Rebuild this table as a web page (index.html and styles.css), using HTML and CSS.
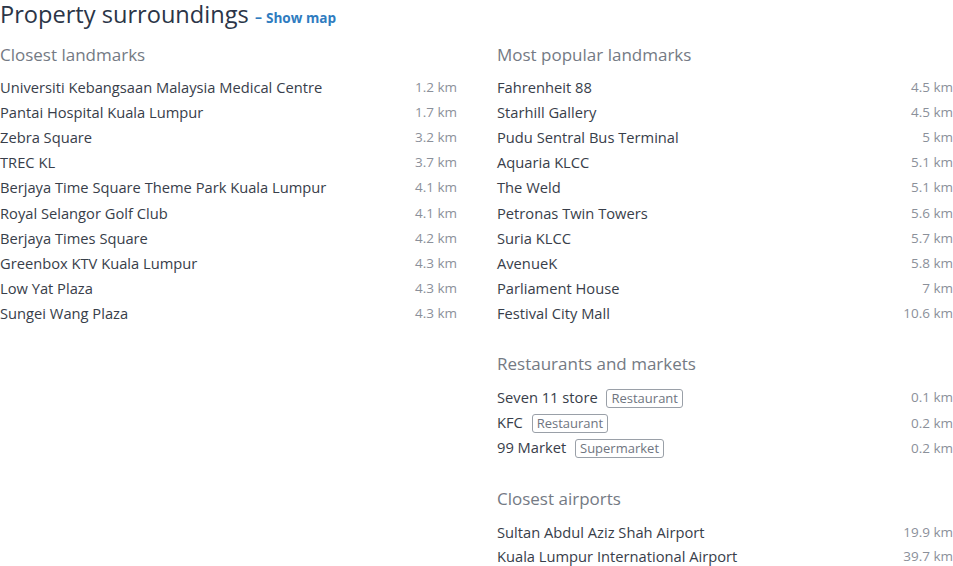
FILE: index.html
```html
<!DOCTYPE html>
<html>
<head>
<meta charset="utf-8">
<link rel="stylesheet" href="styles.css">
</head>
<body>
<div class="page">
  <h1 class="title">Property surroundings <span class="dash">–</span><a class="map-link" href="#">Show map</a></h1>
  <div class="columns">
    <div class="col">
      <section class="group">
        <h2 class="group-title">Closest landmarks</h2>
        <ul class="list">
          <li class="row"><span class="name">Universiti Kebangsaan Malaysia Medical Centre</span><span class="dist">1.2 km</span></li>
          <li class="row"><span class="name">Pantai Hospital Kuala Lumpur</span><span class="dist">1.7 km</span></li>
          <li class="row"><span class="name">Zebra Square</span><span class="dist">3.2 km</span></li>
          <li class="row"><span class="name">TREC KL</span><span class="dist">3.7 km</span></li>
          <li class="row"><span class="name">Berjaya Time Square Theme Park Kuala Lumpur</span><span class="dist">4.1 km</span></li>
          <li class="row"><span class="name">Royal Selangor Golf Club</span><span class="dist">4.1 km</span></li>
          <li class="row"><span class="name">Berjaya Times Square</span><span class="dist">4.2 km</span></li>
          <li class="row"><span class="name">Greenbox KTV Kuala Lumpur</span><span class="dist">4.3 km</span></li>
          <li class="row"><span class="name">Low Yat Plaza</span><span class="dist">4.3 km</span></li>
          <li class="row"><span class="name">Sungei Wang Plaza</span><span class="dist">4.3 km</span></li>
        </ul>
      </section>
    </div>
    <div class="col">
      <section class="group">
        <h2 class="group-title">Most popular landmarks</h2>
        <ul class="list">
          <li class="row"><span class="name">Fahrenheit 88</span><span class="dist">4.5 km</span></li>
          <li class="row"><span class="name">Starhill Gallery</span><span class="dist">4.5 km</span></li>
          <li class="row"><span class="name">Pudu Sentral Bus Terminal</span><span class="dist">5 km</span></li>
          <li class="row"><span class="name">Aquaria KLCC</span><span class="dist">5.1 km</span></li>
          <li class="row"><span class="name">The Weld</span><span class="dist">5.1 km</span></li>
          <li class="row"><span class="name">Petronas Twin Towers</span><span class="dist">5.6 km</span></li>
          <li class="row"><span class="name">Suria KLCC</span><span class="dist">5.7 km</span></li>
          <li class="row"><span class="name">AvenueK</span><span class="dist">5.8 km</span></li>
          <li class="row"><span class="name">Parliament House</span><span class="dist">7 km</span></li>
          <li class="row"><span class="name">Festival City Mall</span><span class="dist">10.6 km</span></li>
        </ul>
      </section>
      <section class="group">
        <h2 class="group-title">Restaurants and markets</h2>
        <ul class="list list-tags">
          <li class="row"><span class="name">Seven 11 store <span class="tag">Restaurant</span></span><span class="dist">0.1 km</span></li>
          <li class="row"><span class="name">KFC <span class="tag">Restaurant</span></span><span class="dist">0.2 km</span></li>
          <li class="row"><span class="name">99 Market <span class="tag">Supermarket</span></span><span class="dist">0.2 km</span></li>
        </ul>
      </section>
      <section class="group">
        <h2 class="group-title">Closest airports</h2>
        <ul class="list list-air">
          <li class="row"><span class="name">Sultan Abdul Aziz Shah Airport</span><span class="dist">19.9 km</span></li>
          <li class="row"><span class="name">Kuala Lumpur International Airport</span><span class="dist">39.7 km</span></li>
        </ul>
      </section>
    </div>
  </div>
</div>
</body>
</html>
```

FILE: styles.css
```css
* { box-sizing: border-box; }
html, body { margin: 0; padding: 0; background: #ffffff; }
body {
  font-family: "Open Sans", "Noto Sans", sans-serif;
  color: #383e4a;
}
.page { width: 953px; }
.title {
  margin: 0;
  font-size: 23.6px;
  font-weight: 400;
  line-height: 32px;
  margin-top: -2px;
  color: #2b3547;
  white-space: nowrap;
}
.dash { font-size: 14px; font-weight: 700; color: #2f7cc0; vertical-align: 1px; margin-right: 4px; }
.map-link {
  font-size: 13.6px;
  font-weight: 700;
  color: #2f7cc0;
  text-decoration: none;
}
.columns {
  display: grid;
  grid-template-columns: 457px 456px;
  column-gap: 40px;
  margin-top: 8px;
}
.group { margin-bottom: 25px; }
.group:last-child { margin-bottom: 0; }
.group-title {
  margin: 0 0 6px;
  font-size: 17px;
  font-weight: 400;
  line-height: 26px;
  color: #747a84;
}
.list { list-style: none; margin: 0; padding: 0; }
.list-tags { padding-top: 2px; padding-bottom: 1px; }
.list-air { padding-top: 1px; }
.row {
  display: flex;
  justify-content: space-between;
  align-items: center;
  height: 25.2px;
  font-size: 14.7px;
  line-height: 20px;
}
.list-air .row { height: 24.6px; }
.name { color: #383e4a; white-space: nowrap; }
.dist { color: #8b909a; font-size: 13.5px; }
.tag {
  display: inline-block;
  margin-left: 5px;
  padding: 0 4px;
  border: 1px solid #9aa0a8;
  border-radius: 3px;
  font-size: 13px;
  line-height: 17px;
  color: #6f7580;
}
```
